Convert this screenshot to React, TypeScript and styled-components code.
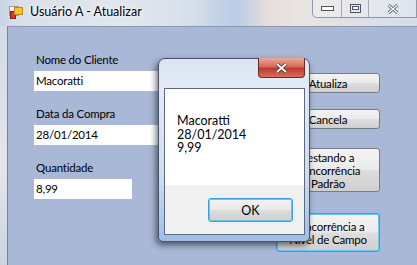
import React from "react";
import styled, { createGlobalStyle } from "styled-components";

const GlobalStyle = createGlobalStyle`
  html, body {
    margin: 0;
    padding: 0;
    width: 417px;
    height: 265px;
    overflow: hidden;
    font-family: Lato, "Open Sans", sans-serif;
  }
`;

const Window = styled.div`
  position: relative;
  width: 417px;
  height: 265px;
  overflow: hidden;
  display: flex;
  flex-direction: column;
  background: linear-gradient(
    90deg,
    #c6d3e4 0px,
    #d9e0e9 20px,
    #e2e7ee 120px,
    #d7dfea 190px,
    #b9cbe6 235px,
    #e6dfdc 270px,
    #e9e4e2 300px,
    #d4dde9 417px
  );
`;

const TitleBar = styled.div`
  height: 26px;
  flex: none;
  display: flex;
  align-items: flex-start;
`;

const TitleIcon = styled.svg`
  margin: 6px 0 0 9px;
  width: 14px;
  height: 14px;
  flex: none;
`;

const TitleText = styled.span`
  margin: 4px 0 0 7px;
  font-size: 12.5px;
  line-height: 16px;
  color: #000;
  text-shadow: 0 0 6px #fff, 0 0 3px #fff;
`;

const CaptionButtons = styled.div`
  margin-left: auto;
  display: flex;
  height: 17px;
  border: 1px solid #8e9aac;
  border-top: none;
  border-radius: 0 0 0 5px;
  background: rgba(255, 255, 255, 0.25);
`;

const CaptionButton = styled.div<{ $w: number }>`
  width: ${(p) => p.$w}px;
  display: flex;
  align-items: center;
  justify-content: center;
  border-left: 1px solid #a3adbb;
  &:first-child {
    border-left: none;
  }
`;

const Body = styled.div`
  flex: 1;
  display: flex;
`;

const LeftFrame = styled.div`
  width: 7px;
  flex: none;
  background: linear-gradient(180deg, #d2dbe6, #e3e6ea 60%, #c9d3e0);
`;

const ClientArea = styled.div`
  flex: 1;
  border-left: 1px solid #75839b;
  border-top: 1px solid #8b98ad;
  background: #a9b8d6;
  display: grid;
  grid-template-columns: 242px 104px;
  align-items: start;
  padding-left: 26px;
  font-size: 11.5px;
  letter-spacing: -0.2px;
  color: #000;
`;

const FieldColumn = styled.div`
  display: flex;
  flex-direction: column;
  gap: 15px;
  padding-top: 25px;
`;

const Field = styled.div`
  display: flex;
  flex-direction: column;
  gap: 4px;
`;

const Label = styled.div`
  line-height: 15px;
  padding-left: 2px;
`;

const TextBox = styled.div<{ $w: number }>`
  width: ${(p) => p.$w}px;
  height: 20px;
  box-sizing: border-box;
  background: #fff;
  line-height: 20px;
  padding-left: 2px;
`;

const ButtonColumn = styled.div`
  display: flex;
  flex-direction: column;
  padding-top: 46px;
`;

const FormButton = styled.div<{ $h: number; $mt: number; $focus?: boolean }>`
  height: ${(p) => p.$h}px;
  margin-top: ${(p) => p.$mt}px;
  box-sizing: border-box;
  border: 1px solid ${(p) => (p.$focus ? "#3c9ed9" : "#777b82")};
  box-shadow: ${(p) => (p.$focus ? "inset 0 0 0 1px #6cc6f2" : "none")};
  border-radius: 3px;
  background: linear-gradient(180deg, #f3f3f3 0%, #ebebeb 48%, #dddddd 52%, #cfcfcf 100%);
  display: flex;
  align-items: center;
  justify-content: center;
  text-align: center;
  line-height: 13px;
`;

/* message box */

const Dialog = styled.div`
  position: absolute;
  left: 158px;
  top: 58px;
  width: 152px;
  height: 184px;
  box-sizing: border-box;
  border: 1px solid #46536a;
  border-radius: 7px 7px 5px 5px;
  background: linear-gradient(
    180deg,
    #d9e5f4 0px,
    #e3ebf6 30px,
    #cddcef 120px,
    #9dbbe6 184px
  );
  box-shadow: -2px 3px 6px rgba(0, 0, 0, 0.55);
  display: flex;
  flex-direction: column;
  padding: 0 4px 6px 5px;
  color: #000;
`;

const DialogCaption = styled.div`
  height: 29px;
  flex: none;
  display: flex;
  justify-content: flex-end;
`;

const CloseButton = styled.div`
  width: 47px;
  height: 20px;
  margin-top: -1px;
  box-sizing: border-box;
  border: 1px solid #6b2b25;
  border-top: none;
  border-radius: 0 0 4px 4px;
  background: linear-gradient(180deg, #e9a99c 0%, #d66c5c 45%, #c0392b 55%, #d2715e 100%);
  display: flex;
  align-items: center;
  justify-content: center;
`;

const DialogClient = styled.div`
  flex: 1;
  display: flex;
  flex-direction: column;
  border: 1px solid #5d6b80;
`;

const MessageArea = styled.div`
  height: 96px;
  background: #fff;
  padding: 25px 0 0 12px;
  box-sizing: border-box;
  font-size: 12.5px;
  line-height: 13.5px;
`;

const ButtonStrip = styled.div`
  flex: 1;
  background: #f0f0f0;
  display: flex;
  justify-content: flex-end;
  align-items: flex-start;
  padding: 13px 11px 0 0;
`;

const OkButton = styled.div`
  width: 85px;
  height: 24px;
  box-sizing: border-box;
  border: 1px solid #3c9ed9;
  box-shadow: inset 0 0 0 1px #6cc6f2;
  border-radius: 3px;
  background: linear-gradient(180deg, #f2f2f2 0%, #e9e9e9 48%, #dcdcdc 52%, #cfcfcf 100%);
  display: flex;
  align-items: center;
  justify-content: center;
  font-size: 12.5px;
`;

const Glyph = styled.svg`
  display: block;
`;

export default function App() {
  return (
    <>
      <GlobalStyle />
      <Window>
        <TitleBar>
          <TitleIcon viewBox="0 0 14 14">
            <rect x="0.5" y="0.5" width="9" height="9" fill="#f4f4f4" stroke="#9a9a9a" />
            <rect x="1.5" y="5.5" width="5" height="7" fill="#d8322a" stroke="#8a1a14" />
            <rect x="5.5" y="1.5" width="8" height="7" fill="#f6c428" stroke="#c08a10" />
          </TitleIcon>
          <TitleText>Usuário A - Atualizar</TitleText>
          <CaptionButtons>
            <CaptionButton $w={28}>
              <Glyph width="13" height="6" viewBox="0 0 13 6">
                <rect x="0.5" y="0.5" width="12" height="4" fill="#fff" stroke="#4a5566" />
              </Glyph>
            </CaptionButton>
            <CaptionButton $w={26}>
              <Glyph width="11" height="9" viewBox="0 0 11 9">
                <rect x="0.5" y="0.5" width="10" height="8" fill="none" stroke="#4a5566" />
                <rect x="2.5" y="2.5" width="6" height="3" fill="#fff" stroke="#4a5566" />
              </Glyph>
            </CaptionButton>
            <CaptionButton $w={47}>
              <Glyph width="12" height="10" viewBox="0 0 12 10">
                <path d="M1.5 1 L10.5 9 M10.5 1 L1.5 9" stroke="#4a5566" strokeWidth="3" />
                <path d="M1.5 1 L10.5 9 M10.5 1 L1.5 9" stroke="#fff" strokeWidth="1.4" />
              </Glyph>
            </CaptionButton>
          </CaptionButtons>
        </TitleBar>
        <Body>
          <LeftFrame />
          <ClientArea>
            <FieldColumn>
              <Field>
                <Label>Nome do Cliente</Label>
                <TextBox $w={200}>Macoratti</TextBox>
              </Field>
              <Field>
                <Label>Data da Compra</Label>
                <TextBox $w={200}>28/01/2014</TextBox>
              </Field>
              <Field>
                <Label>Quantidade</Label>
                <TextBox $w={98}>8,99</TextBox>
              </Field>
            </FieldColumn>
            <ButtonColumn>
              <FormButton $h={20} $mt={0}>Atualiza</FormButton>
              <FormButton $h={20} $mt={16}>Cancela</FormButton>
              <FormButton $h={44} $mt={19}>
                Testando a<br />Concorrência<br />Padrão
              </FormButton>
              <FormButton $h={39} $mt={21} $focus>
                Concorrência a<br />Nível de Campo
              </FormButton>
            </ButtonColumn>
          </ClientArea>
        </Body>
        <Dialog>
          <DialogCaption>
            <CloseButton>
              <Glyph width="13" height="10" viewBox="0 0 13 10">
                <path d="M2 1 L11 9 M11 1 L2 9" stroke="#5a2a26" strokeWidth="3.4" />
                <path d="M2 1 L11 9 M11 1 L2 9" stroke="#fff" strokeWidth="1.8" />
              </Glyph>
            </CloseButton>
          </DialogCaption>
          <DialogClient>
            <MessageArea>
              Macoratti
              <br />
              28/01/2014
              <br />
              9,99
            </MessageArea>
            <ButtonStrip>
              <OkButton>OK</OkButton>
            </ButtonStrip>
          </DialogClient>
        </Dialog>
      </Window>
    </>
  );
}
